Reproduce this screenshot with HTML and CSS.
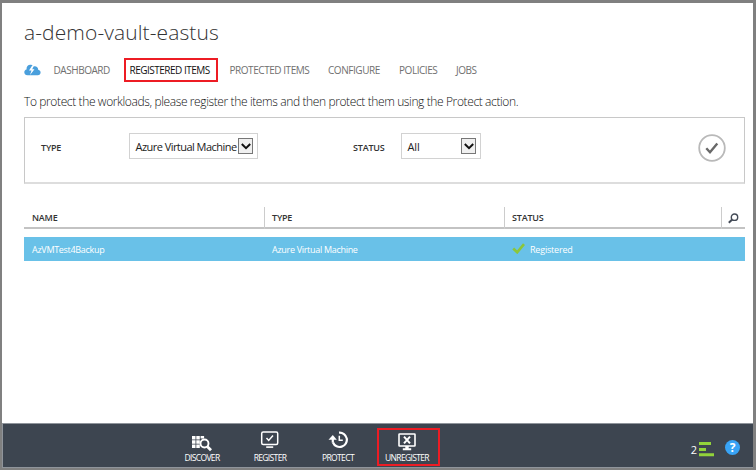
FILE: index.html
```html
<!DOCTYPE html>
<html lang="en">
<head>
<meta charset="utf-8">
<title>a-demo-vault-eastus</title>
<link rel="stylesheet" href="styles.css">
</head>
<body>
<div class="window">
  <main class="content">
    <h1 class="title">a-demo-vault-eastus</h1>
    <nav class="tabs">
      <svg class="cloud" width="17" height="12" viewBox="0 0 17 12"><path fill="#4a9fdc" d="M3.5 11.2C1.2 11.2.3 9.800.3 8.300.3 6.900 1.200 5.800 2.500 5.500 2.300 2.800 4 .800 6.300.800c1.400 0 2.500.600 3.200 1.700C12 1.800 14.200 3.200 14.200 5.700c1.600.300 2.400 1.500 2.400 2.800 0 1.600-1.100 2.700-2.800 2.700z"/><path fill="#fff" d="M8.200 1.500 5 6.500h2.500L6 11l4.500-5.800H8.200L10 1.500z"/></svg>
      <a class="tab t1">DASHBOARD</a>
      <a class="tab t2 active">REGISTERED ITEMS</a>
      <a class="tab t3">PROTECTED ITEMS</a>
      <a class="tab t4">CONFIGURE</a>
      <a class="tab t5">POLICIES</a>
      <a class="tab t6">JOBS</a>
    </nav>
    <p class="intro">To protect the workloads, please register the items and then protect them using the Protect action.</p>
    <section class="filters">
      <span class="label label-type">TYPE</span>
      <div class="select select-type"><span class="value">Azure Virtual Machine</span><span class="arrow"><svg width="10" height="7" viewBox="0 0 10 7"><path d="M.8 1 5 5.200 9.200 1" fill="none" stroke="#111" stroke-width="2"/></svg></span></div>
      <span class="label label-status">STATUS</span>
      <div class="select select-status"><span class="value">All</span><span class="arrow"><svg width="10" height="7" viewBox="0 0 10 7"><path d="M.8 1 5 5.200 9.200 1" fill="none" stroke="#111" stroke-width="2"/></svg></span></div>
      <svg class="apply" width="28" height="28" viewBox="0 0 28 28"><circle cx="14" cy="14" r="12.800" fill="none" stroke="#b9b9b9" stroke-width="1.800"/><path d="m8.300 14.200 3.700 4 7.300-8.700" fill="none" stroke="#686868" stroke-width="2.400"/></svg>
    </section>
    <div class="grid head">
      <span class="cell name">NAME</span>
      <span class="cell type">TYPE</span>
      <span class="cell status">STATUS</span>
      <span class="cell search"><svg width="11" height="11" viewBox="0 0 11 11"><circle cx="6.500" cy="4.200" r="3.200" fill="none" stroke="#444b57" stroke-width="1.400"/><path d="M4.200 6.500.8 9.800" stroke="#444b57" stroke-width="2"/></svg></span>
    </div>
    <div class="grid row">
      <span class="cell name">AzVMTest4Backup</span>
      <span class="cell type">Azure Virtual Machine</span>
      <span class="cell status"><svg width="13" height="11" viewBox="0 0 13 11"><path d="m1.200 5.500 4 3.800L12 1.200" fill="none" stroke="#8cc63a" stroke-width="2.600"/></svg><span class="state">Registered</span></span>
    </div>
  </main>
  <footer class="bar">
    <div class="action discover">
      <svg width="20" height="18" viewBox="0 0 20 18"><path fill="#fff" d="M0 2h3.500v3.500H0zM4.300 2h3.500v3.500H4.300zM8.600 2h3.500v2.500H8.600zM0 6.300h3.500v3.500H0zM4.300 6.300h3.500v3.500H4.300zM0 10.600h3.500v3.500H0zM4.300 10.600h3.500v3.500H4.300z"/><circle cx="12.500" cy="9.500" r="4" fill="#3d4550" stroke="#fff" stroke-width="1.900"/><path d="m15.500 12.700 3.500 3.500" stroke="#fff" stroke-width="2.800"/></svg>
      <span class="caption">DISCOVER</span>
    </div>
    <div class="action register">
      <svg width="20" height="18" viewBox="0 0 20 18"><rect x="1.700" y="1" width="16" height="12.500" rx="1.500" fill="none" stroke="#fff" stroke-width="1.500"/><path d="m6.500 7 2.200 2.400L13 4.500" fill="none" stroke="#fff" stroke-width="1.500"/><path d="M6.200 15.300h7v1.600h-7z" fill="#fff"/></svg>
      <span class="caption">REGISTER</span>
    </div>
    <div class="action protect">
      <svg width="20" height="18" viewBox="0 0 20 18"><path d="M11 1.600A7.200 7.200 0 1 1 5 11.500" fill="none" stroke="#fff" stroke-width="2.200"/><path d="M.5 8.800 4.800 4l4 4.800z" fill="#fff"/><path d="M4.800 8v3.700" stroke="#fff" stroke-width="2.200"/><path d="M11.300 4.800v4.500h3.500" fill="none" stroke="#fff" stroke-width="1.500"/></svg>
      <span class="caption">PROTECT</span>
    </div>
    <div class="action unregister">
      <svg width="20" height="18" viewBox="0 0 20 18"><rect x="2" y="1" width="16" height="12" rx=".5" fill="none" stroke="#fff" stroke-width="1.600"/><path d="m7 3.700 6 6.600m0-6.600-6 6.600" stroke="#fff" stroke-width="2"/><path d="M8.300 13h3.400v2.300h2.500v1.900H5.800v-1.900h2.500z" fill="#fff"/></svg>
      <span class="caption">UNREGISTER</span>
    </div>
    <div class="tray">
      <span class="count">2</span>
      <svg class="jobs" width="15" height="15" viewBox="0 0 15 15"><path fill="#92d33b" d="M0 0h12v3H0zM0 6h7v3H0zM0 11.300h15v3H0z"/></svg>
      <span class="help">?</span>
    </div>
  </footer>
</div>
</body>
</html>
```
FILE: styles.css
```css
* { box-sizing: border-box; }
body { margin: 0; background: #808080; font-family: "Open Sans", "Noto Sans", sans-serif; }
.window { width: 756px; height: 470px; border: solid #808080; border-width: 3px 3px 2px 2px; background: #fff; display: flex; flex-direction: column; }
.content { flex: 1; padding: 16px 8px 0 22px; }
.title { margin: 0; height: 26px; line-height: 26px; font-size: 21px; font-weight: 300; color: #333; letter-spacing: .1px; white-space: nowrap; }
.tabs { display: flex; align-items: center; height: 24px; margin-top: 13px; }
.cloud { margin-right: 12.500px; }
.tab { font-size: 10px; line-height: 14px; color: #707070; white-space: nowrap; letter-spacing: -.45px; }
.t1 { width: 70.500px; }
.t2 { width: 94px; margin-right: 11.500px; height: 24px; border: 2px solid #ed1c24; padding: 3px 0 0 3.500px; }
.t3 { width: 98.500px; }
.t4 { width: 71px; }
.t5 { width: 57px; }
.tab.active { color: #111; letter-spacing: -.5px; }
.intro { margin: 11px 0 0; height: 18px; line-height: 18px; font-size: 12px; font-weight: 300; color: #111; white-space: nowrap; letter-spacing: -.38px; }
.filters { display: flex; width: 721px; height: 67px; margin-top: 6px; border: 1px solid #c8c8c8; border-bottom: 2px solid #ddd; padding: 15px 0 0 16px; }
.label { font-size: 9px; line-height: 14px; font-weight: 600; color: #333; padding-top: 8px; letter-spacing: -.2px; }
.label-type { width: 88px; }
.label-status { width: 48px; margin-left: 95px; }
.select { display: flex; justify-content: space-between; height: 26px; border: 1px solid #d2d2d2; padding: 4px 4px 0 5.500px; }
.select-type { width: 129px; }
.select-status { width: 80px; }
.value { font-size: 11px; line-height: 17px; color: #222; white-space: nowrap; letter-spacing: -.54px; }
.select-status .value { letter-spacing: -.1px; }
.arrow { flex: none; width: 15px; height: 16px; border: 1px solid #777; background: #f0f0f0; display: flex; align-items: center; justify-content: center; }
.apply { margin: 1px 0 0 217px; }
.grid { display: grid; grid-template-columns: 240px 240px 218px 23px; width: 721px; }
.head { height: 22px; margin-top: 23px; border-bottom: 2px solid #c3c3c3; font-size: 9px; font-weight: 600; color: #333; letter-spacing: -.2px; }
.cell { padding-left: 8px; white-space: nowrap; }
.head .cell { line-height: 22px; }
.head .type, .head .status { border-left: 1px solid #ccc; padding-left: 7px; }
.head .search { border-left: 1px solid #ccc; margin-left: -1px; padding: 6px 0 0 6px; line-height: 0; }
.row { height: 24px; margin-top: 8px; background: #69c1e8; color: #fff; font-size: 9px; line-height: 26px; letter-spacing: -.3px; }
.row .status { display: flex; align-items: flex-start; }
.row .status svg { margin-top: 6px; }
.state { margin-left: 5px; letter-spacing: -.2px; }
.bar { flex: none; display: flex; height: 45px; padding-left: 165px; background: #3d4550; border: 1px solid #8f949b; border-right: 0; }
.action { display: flex; flex-direction: column; align-items: center; width: 68px; padding-top: 7px; }
.caption { margin-top: 3px; font-size: 8.500px; line-height: 11px; color: #fff; letter-spacing: -.65px; }
.discover svg { margin-top: 3px; }
.discover .caption { margin-top: 0; }
.unregister { width: 63px; height: 38px; margin: 4px 0 0 4.500px; border: 2px solid #ed1c24; padding: 3px 2px 0 0; }
.unregister .caption { margin-top: 1px; }
.tray { display: flex; margin-left: auto; padding-right: 13px; color: #fff; }
.count { font-size: 11px; line-height: 16px; margin: 18px 2px 0 0; }
.jobs { margin: 18px 11px 0 0; }
.help { width: 15px; height: 15px; margin-top: 16px; border-radius: 50%; background: #38a3f5; font-size: 12px; line-height: 15px; font-weight: 700; text-align: center; }
```
